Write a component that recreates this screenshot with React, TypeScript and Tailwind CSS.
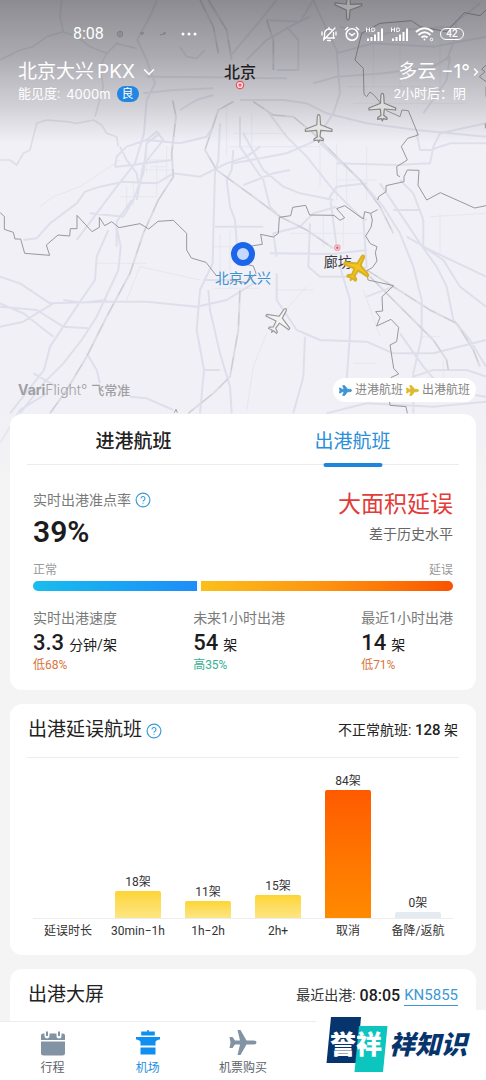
import React from "react";
import { ChevronDown, ChevronRight } from "lucide-react";

const PLANE =
  "M0 -42 C3 -42 4.500 -36 4.500 -30 L5.500 -12 L40 2 V8 L6 5 L4 24 L14 31 V36 L2.500 34 L0 41 L-2.500 34 L-14 36 V31 L-4 24 L-6 5 L-40 8 V2 L-5.500 -12 L-4.500 -30 C-4.500 -36 -3 -42 0 -42Z";

const ROADS = [
  "M470 0 C455 50 430 80 412 120 L440 180 L465 250 L440 300 L432 400 L405 490 L350 560 L290 640 L230 720",
  "M0 910 L70 940 L160 1010 M320 905 L150 910 M320 905 L440 905 L590 920 L680 900 L760 850",
  "M0 830 L60 850 L150 910 M190 900 L245 908 L320 900",
  "M0 980 L70 965 L160 910 M0 920 L110 930 L190 980 L265 985",
  "M350 680 L362 740 L355 810 L290 950 L245 1020 L190 1090 L130 1150 L60 1240",
  "M325 690 L290 770 L285 840 L230 920 L150 1040 L132 1110 L30 1240",
  "M395 600 L350 665 L350 740",
  "M70 720 L110 715 L150 670 L230 610 L255 575 L300 560 L370 545 L470 550 L520 520 L600 530 L680 490 L740 470 L780 440",
  "M270 640 L370 650 L400 600 L430 520 L440 430 L480 400",
  "M345 500 L350 470 L380 440 L440 420 L540 430 L620 410 L640 380",
  "M345 500 L400 495 L430 490 L520 480",
  "M360 440 L380 480 L410 520 L415 550",
  "M440 420 L470 395 L490 420 L430 495 L410 600",
  "M660 370 L655 480 L645 520 L640 700 L638 790 L600 870 L590 990 L612 1110 L600 1240",
  "M700 450 L695 510 L680 540 L690 620 L705 660 L715 790",
  "M645 680 L790 680 M610 840 L700 840 M615 1110 L660 1110",
  "M625 870 L630 930 L660 1060 L690 1160 L695 1240",
  "M720 300 L850 300 L920 310 L980 340 L1100 370 L1250 390 L1458 410",
  "M800 330 L860 410 L920 470 L1000 570 L1080 650 L1100 660",
  "M730 400 L790 510 L850 560 L900 580 L1000 600",
  "M730 555 L820 520 L870 510 M700 490 L860 460 L940 425 L960 400 L1000 340 L1020 280 L1010 150",
  "M720 350 L720 440 L790 540 L810 620 L830 640",
  "M1010 490 L1190 495 L1290 490 L1300 440 L1320 400 L1458 370",
  "M1250 400 L1260 450 L1290 450 L1350 430 L1458 430",
  "M1100 550 L1010 560 L990 590 L1010 740",
  "M960 430 L1080 540 L1150 620 L1200 700 L1240 800 L1265 900 L1265 1010 L1240 1120 L1240 1240",
  "M1200 540 L1240 580 L1270 660 L1270 740 L1330 780 L1380 860 L1458 920",
  "M1140 550 L1200 640 L1260 730 L1310 800 L1340 860 L1360 960 L1410 1020 L1458 1100",
  "M1180 630 L1260 630 M1220 710 L1290 750 L1458 830",
  "M830 770 L820 700 L900 680 L940 640 L1010 620",
  "M810 760 L1000 762 L1100 750",
  "M930 670 L925 800 L960 830 L1060 830 L1100 800 L1090 660",
  "M830 820 L830 900 L890 990 L960 1020 L1100 1025 L1180 1060 L1300 1060 L1458 1020",
  "M1020 800 L1050 900 L1050 1000 L1040 1140",
  "M915 1010 L910 1130 L880 1240",
  "M1180 860 L1100 890 M1200 1000 L1270 1100 L1330 1170 L1458 1190",
  "M1240 1130 L1300 1110 L1400 1110 L1458 1130",
  "M940 250 L1010 230 L1150 220 L1300 200 L1350 170",
  "M1010 160 L1120 130 L1300 140 L1458 110",
  "M1020 80 L1120 110 L1200 90 L1350 80 L1440 10",
  "M440 230 L640 232 L860 235 M430 280 L520 270 L640 265",
  "M540 330 L590 300 L640 285 M800 60 L900 65 L940 0",
  "M690 170 L790 50 L830 0 M740 180 L800 120 L870 80 L930 50",
  "M860 80 L895 120 L895 210 L830 210 M940 0 L985 100 L1015 160",
  "M980 1240 L1100 1210 L1300 1220 L1458 1205",
  "M390 1190 L440 1195 L520 1230 M260 1060 L290 1110 L300 1150",
  "M1340 180 L1360 130 L1370 60 M1270 340 L1340 240 L1350 170",
  "M0 1330 L60 1230 L140 1180 M100 1120 L170 1160",
];

const MINOR = [
  "M440 480 H510 M440 450 V520 M470 480 V590 M500 440 V540 M420 510 H520 M450 500 H500",
  "M380 560 V640 M360 590 H470 M400 540 V620",
  "M680 320 V470 M755 340 V460 M700 400 H860 M690 440 H960 M960 420 V560 M1010 430 V600",
  "M1040 500 V620 M1100 440 V600 M1010 540 H1130 M870 700 H1090 M1030 650 V740 M970 650 V740",
  "M1120 100 V260 M1200 60 V260 M1320 120 V300 M1040 260 H1300 M1060 310 H1400",
  "M660 700 V860 M690 690 V870 M640 740 H700 M640 865 H780 M830 870 H940",
  "M420 800 L380 900 M420 800 L600 840 M290 790 L440 790 M920 860 L830 960",
  "M1090 870 L1140 1010 M1060 1090 H1130 M800 1000 L760 1100 L740 1230",
  "M1290 650 L1458 640 M1320 640 V760 M1260 1010 H1320 M1330 1080 V1160",
  "M120 620 L160 590 L240 560 L330 500 L360 480",
];

const RAILS = [
  "M475 600 L520 530 L515 460 L528 350 L518 300",
  "M475 600 L430 700 L390 820 L320 950 L260 1070 L200 1170 L150 1240",
  "M700 305 L655 330 L615 450 L650 510 L760 590 L840 650 L920 690 L1000 745",
  "M760 305 L820 345 L880 350 L940 400 L1000 460 L1080 540 L1140 620 L1180 700",
  "M1100 810 L1180 860 L1290 930 L1370 970 L1420 1050 L1440 1100",
  "M1110 830 L1210 930 L1300 1020 L1340 1080 L1345 1110",
  "M720 870 L715 990 L690 1130 L640 1180 L565 1240",
  "M600 0 L640 80 L655 160 M625 0 L680 90 L695 180 M800 60 L820 120 L820 210",
];

const BORDERS = [
  "M0 637 L13 650 L13 688 L40 697 L45 717 L62 717 L74 760 L149 766 L139 735 L174 705 L209 708 L211 686 L231 686 L231 646 L276 695 L298 682 L298 652 L314 677 L335 665 L357 683 L420 671 L446 687 L474 664 L520 661 L560 700 L560 750 L574 774 L618 787 L650 828",
  "M754 738 L787 733 L782 703 L820 711 L835 700 L838 652 L872 647 L878 622 L917 616 L929 645 L1002 646 L1020 661 L1034 653 L1010 626 L1034 617 L1090 657 L1094 635 L1112 640 L1133 629",
  "M1112 640 L1117 660 L1113 682 L1097 708 L1111 731 L1131 740 L1126 758 L1131 783 L1117 803 L1100 812 L1104 840 L1181 857 L1146 890 L1148 933 L1127 935 L1140 952 L1130 978 L1173 958 L1196 982 L1190 1025 L1170 1035 L1181 1105 L1196 1122 L1172 1133",
  "M1133 600 L1136 590 L1158 575 L1158 557 L1212 545 L1212 530 L1222 510 L1257 511 L1254 556 L1280 600 L1321 578 L1424 624 L1458 617",
  "M1200 530 L1192 526 L1190 500 L1222 480 L1204 440 L1223 415 L1255 405 L1225 332 L1206 330 L1200 350 L1160 332 L1124 287 L1110 276 L1100 290 L1092 283 L1090 205 L1065 180 L1085 100 L1140 70 L1235 62 L1260 80 L1340 95 L1393 38 L1440 47 L1458 30",
  "M1458 195 L1445 208 L1455 215 L1438 230 L1458 245 M1458 260 V290 M1456 370 V385 M1168 1200 L1170 1216 L1218 1220 L1222 1240 M523 1238 L528 1228 L532 1238",
  "M728 790 L760 798 L768 820 L740 848 L690 840",
];

const HILLS =
  "M0 480 L30 480 L50 495 L70 460 L90 450 L110 370 L140 360 L200 365 L230 370 L280 360 L305 375 L320 400 L350 410 L355 440 M0 180 L60 150 L100 140 L140 110 L190 95 L180 50 L185 0 M190 95 L230 110 L270 140 L320 160 L300 200 L310 260 L285 350 M320 160 L350 130 L410 145 M540 140 L560 170 L590 175 L615 150";

function MapPlane({ x, y, turn, fill, stroke }: { x: number; y: number; turn: number; fill: string; stroke: string }) {
  return (
    <path d={PLANE} transform={`translate(${x} ${y}) rotate(${turn})`} fill={fill} stroke={stroke} strokeWidth={3.5} strokeLinejoin="round" />
  );
}

function AirMap() {
  return (
    <div className="absolute inset-x-0 top-0 h-[490px] overflow-hidden bg-[#f0f0f6]" aria-hidden="true">
      <svg viewBox="0 0 1458 1470" preserveAspectRatio="xMidYMin slice" className="block size-full">
        <defs>
          <linearGradient id="topShade" x1="0" y1="0" x2="0" y2="1">
            <stop offset="0" stopColor="#3c3c42" stopOpacity="0.56" />
            <stop offset="0.4" stopColor="#44444a" stopOpacity="0.4" />
            <stop offset="0.75" stopColor="#55555c" stopOpacity="0.2" />
            <stop offset="1" stopColor="#66666c" stopOpacity="0" />
          </linearGradient>
          <linearGradient id="bottomFade" x1="0" y1="0" x2="0" y2="1">
            <stop offset="0" stopColor="#f4f4f4" stopOpacity="0" />
            <stop offset="1" stopColor="#f4f4f4" />
          </linearGradient>
        </defs>
        <g fill="none" strokeLinejoin="round">
          <path d={MINOR.join(" ")} stroke="#e6e6f0" strokeWidth={3} />
          <path d={ROADS.join(" ")} stroke="#dfdfec" strokeWidth={6} />
          <path d={HILLS} stroke="#dedee4" strokeWidth={5} />
          <path d={RAILS.join(" ")} stroke="#dcdce4" strokeWidth={6} />
          <path d={RAILS.join(" ")} stroke="#cbcad2" strokeWidth={3} strokeDasharray="38 30" />
          <path d={BORDERS.join(" ")} stroke="#98989d" strokeWidth={3} />
        </g>
        <rect width="1458" height="430" fill="url(#topShade)" />
        <rect y="1220" width="1458" height="250" fill="url(#bottomFade)" />
        <g fill="none" stroke="#e4525e" strokeWidth={3.5}>
          <circle cx="720" cy="255" r="11" fill="#f6dfe3" />
          <circle cx="720" cy="255" r="3" />
          <circle cx="1012" cy="743" r="8" stroke="#efaab4" strokeWidth={4} fill="#f6dfe3" />
          <circle cx="1012" cy="743" r="2" />
        </g>
        <circle cx="729" cy="762" r="27" fill="#c5d9ff" stroke="#1d65ea" strokeWidth={18} />
        <MapPlane x={1045} y={18} turn={182} fill="#a9a9ac" stroke="#707072" />
        <MapPlane x={1147} y={322} turn={0} fill="#dddddb" stroke="#828180" />
        <MapPlane x={956} y={386} turn={0} fill="#e6e6e4" stroke="#8b8a88" />
        <MapPlane x={836} y={962} turn={31} fill="#f3f3f3" stroke="#99999b" />
      </svg>
      <span className="absolute top-[63px] left-[49.4%] -translate-x-1/2 text-[16px] leading-[20px] font-medium text-[#1f1f22]">北京</span>
      <span className="absolute top-[269px] left-1/2 -translate-x-1/2 text-[14px] leading-[18px] text-[#3d92d0]">北京大兴</span>
      <span className="absolute top-[253px] left-[69.5%] -translate-x-1/2 text-[14px] leading-[18px] text-[#3a3a3d]">廊坊</span>
      <svg viewBox="-45 -45 90 90" className="absolute top-[253px] left-[73.4%] size-[30px] -translate-x-1/2">
        <path d={PLANE} transform="rotate(28)" fill="#f3c522" stroke="#d9b022" strokeWidth={6} strokeLinejoin="round" />
      </svg>
    </div>
  );
}

function Signal() {
  return (
    <svg viewBox="0 0 20 16" className="h-4 w-5" fill="currentColor">
      <path d="M2 12.500h2V15H2zM5.500 11h2v4h-2zM9 8.500h2V15H9zM12.500 6h2v9h-2zM16 2.500h2V15h-2z" />
      <path d="M1.500 1.500v4.500M4.500 1.500v4.500M1.500 3.700h3M6.700 2v3.500h1.300q1.800 0 1.800-1.800T8 2z" fill="none" stroke="currentColor" strokeWidth="0.900" />
    </svg>
  );
}

function StatusBar() {
  return (
    <div className="flex items-center justify-between pr-[22px] pl-[73px] pt-6 text-white">
      <div className="flex items-center">
        <span className="text-[16px] leading-5">8:08</span>
        <svg viewBox="0 0 52 8" className="ml-[12px] h-2 w-[52px]" fill="none" stroke="#808085" strokeWidth="1.300">
          <circle cx="4" cy="4" r="2.500" />
          <path d="M3 4h2M24 3h4M26 3v2M44 5l3-1M48 5v-2l2 0" />
        </svg>
        <svg viewBox="0 0 16 4" className="ml-[13px] h-1 w-4" fill="currentColor">
          <circle cx="2" cy="2" r="1.500" />
          <circle cx="8" cy="2" r="1.500" />
          <circle cx="14" cy="2" r="1.500" />
        </svg>
      </div>
      <div className="flex items-center gap-[5px]">
        <svg viewBox="0 0 16 16" className="mr-0.5 size-4" fill="none" stroke="currentColor" strokeWidth="1.300" strokeLinecap="round">
          <path d="M3.500 12V7.500a4.500 4.500 0 0 1 7-3.700M12.500 6.500V12H6M2.500 12h1M12.500 12h1M6.500 14.500h3M14 2 2.500 14M8 2.500v-1M1 6v3M15 6v3" />
        </svg>
        <svg viewBox="0 0 16 16" className="size-4" fill="none" stroke="currentColor" strokeWidth="1.500" strokeLinecap="round">
          <circle cx="8" cy="8.500" r="5.800" />
          <path d="M5.500 7.500 8 9.500l2.500-2M1.500 3.500l2.200-2M14.500 3.500l-2.200-2" />
        </svg>
        <Signal />
        <Signal />
        <svg viewBox="0 0 20 16" className="h-4 w-5" fill="none" stroke="currentColor" strokeWidth="1.900">
          <path d="M1 6q8.500-7.500 17 0M3.500 9q6-5.500 12 0M6.500 11.500q3-2.500 6 0" />
          <circle cx="9.500" cy="13.500" r="1" fill="currentColor" stroke="none" />
          <circle cx="16.500" cy="13.500" r="1.300" strokeWidth="1" />
        </svg>
        <span className="flex h-[12px] w-6 items-center justify-center rounded-full border border-white text-[10px] leading-none font-medium">42</span>
      </div>
    </div>
  );
}

function HelpButton({ label }: { label: string }) {
  return (
    <button type="button" aria-label={label} className="text-[#3b9bd6]">
      <svg viewBox="0 0 16 16" className="block size-4" fill="none" stroke="currentColor">
        <circle cx="8" cy="8" r="6.900" strokeWidth="1.200" />
        <path d="M6 6.500a2 2 0 1 1 3 1.700q-1 .5-1 1.300M8 10.700v1" strokeWidth="1.100" />
      </svg>
    </button>
  );
}

function LegendPlane({ tone }: { tone: string }) {
  return (
    <svg viewBox="0 0 16 14" className={`size-[13px] ${tone}`} fill="currentColor">
      <path d="M15.500 7q0 1.500-2.500 1.500h-2.500L7 13H4.500l1.800-4.500H3.500L2 10H.5l.7-3L.500 4H2l1.500 1.500h2.800L4.500 1H7l3.500 4.500H13q2.500 0 2.500 1.500Z" stroke="currentColor" strokeLinejoin="round" />
    </svg>
  );
}

const stats = [
  { label: "实时出港速度", value: "3.3", unit: "分钟/架", delta: "低68%", tone: "text-[#d97440]" },
  { label: "未来1小时出港", value: "54", unit: "架", delta: "高35%", tone: "text-[#37b093]" },
  { label: "最近1小时出港", value: "14", unit: "架", delta: "低71%", tone: "text-[#d97440]" },
];

const bars = [
  { label: "30min−1h", count: 18, height: 27, fill: "bg-linear-to-b from-[#fdd52f] to-[#fde682]" },
  { label: "1h−2h", count: 11, height: 17, fill: "bg-linear-to-b from-[#fdd52f] to-[#fde682]" },
  { label: "2h+", count: 15, height: 23, fill: "bg-linear-to-b from-[#fdd52f] to-[#fde682]" },
  { label: "取消", count: 84, height: 128, fill: "bg-linear-to-b from-[#ff5a00] to-[#ff8a00]" },
  { label: "备降/返航", count: 0, height: 6, fill: "bg-[#e4ebf1]" },
];

function PunctualityCard() {
  return (
    <section className="rounded-xl bg-white">
      <div role="tablist" className="grid grid-cols-2 px-[14px] text-[19px]">
        <button type="button" role="tab" aria-selected="false" className="h-[50px] pt-1.5 font-medium text-[#222]">
          进港航班
        </button>
        <button type="button" role="tab" aria-selected="true" className="relative h-[50px] pt-1.5 text-[#2a8fd8]">
          出港航班
          <span className="absolute -bottom-[3px] left-1/2 h-1 w-[59px] -translate-x-1/2 rounded-full bg-[#1d86dc]" />
        </button>
      </div>
      <div className="mx-[17px] h-px bg-[#ececec]" />
      <div className="px-[23px] pb-[17px]">
        <div className="flex justify-between pt-6">
          <div>
            <div className="flex items-center gap-1 pt-px text-[14px] leading-5 text-[#7a7a7a]">
              实时出港准点率
              <HelpButton label="准点率说明" />
            </div>
            <p className="mt-1 text-[30px] leading-9 font-semibold text-[#1c1c1e]">39%</p>
          </div>
          <div className="text-right">
            <p className="text-[23px] leading-8 text-[#e23c39]">大面积延误</p>
            <p className="mt-[3px] text-[14px] leading-5 text-[#666]">差于历史水平</p>
          </div>
        </div>
        <div className="mt-3 flex justify-between text-[12px] leading-4 text-[#9a9a9a]">
          <span>正常</span>
          <span>延误</span>
        </div>
        <div className="mt-[3px] flex h-[10px] gap-1 overflow-hidden rounded-full">
          <div className="bg-linear-to-r from-[#1bbcee] to-[#1e8df8]" style={{ width: "39%" }} />
          <div className="flex-1 bg-linear-to-r from-[#fbbf1a] via-[#fd9210] to-[#f95200]" />
        </div>
        <div className="mt-[17px] flex justify-between">
          {stats.map((s) => (
            <div key={s.label}>
              <p className="text-[14px] leading-5 text-[#7a7a7a]">{s.label}</p>
              <p className="mt-px flex h-7 items-baseline gap-[5px] leading-7 text-[#1c1c1e]">
                <span className="text-[22px] font-medium">{s.value}</span>
                <span className="text-[14px]">{s.unit}</span>
              </p>
              <p className={`text-[12px] leading-4 ${s.tone}`}>{s.delta}</p>
            </div>
          ))}
        </div>
      </div>
    </section>
  );
}

function DelayCard() {
  return (
    <section className="rounded-xl bg-white pb-[15px]">
      <div className="flex h-[53px] items-center justify-between px-[18px]">
        <h2 className="flex items-center gap-1 text-[19px] text-[#222]">
          出港延误航班
          <HelpButton label="延误航班说明" />
        </h2>
        <p className="text-[14px] text-[#222]">
          不正常航班: <span className="text-[15px] font-medium">128</span> 架
        </p>
      </div>
      <div className="mx-[17px] h-px bg-[#ececec]" />
      <div className="px-[23px] text-center text-[12px] text-[#333]">
        <div className="grid h-[161px] grid-cols-6 items-end border-b border-[#ededed]">
          <span />
          {bars.map((b) => (
            <div key={b.label} className="flex flex-col items-center">
              <span className="leading-[18px]">{b.count}架</span>
              <div className={`w-[46px] rounded-t-xs ${b.fill}`} style={{ height: b.height }} />
            </div>
          ))}
        </div>
        <div className="grid grid-cols-6 pt-[3px] leading-[18px] whitespace-nowrap">
          <span>延误时长</span>
          {bars.map((b) => (
            <span key={b.label}>{b.label}</span>
          ))}
        </div>
      </div>
    </section>
  );
}

function BoardCard() {
  return (
    <section className="min-h-20 rounded-xl bg-white">
      <div className="flex h-[53px] items-center justify-between px-[18px]">
        <h2 className="text-[19px] text-[#222]">出港大屏</h2>
        <p className="flex items-center gap-1 text-[14px] text-[#333]">
          最近出港: <span className="text-[16px] leading-5 font-medium text-[#1c1c1e]">08:05</span>
          <a href="#KN5855" className="border-b border-[#3d97d6] text-[15px] leading-[19px] text-[#3d97d6]">
            KN5855
          </a>
        </p>
      </div>
    </section>
  );
}

function PartnerLogo() {
  return (
    <div className="absolute right-0 bottom-0 flex h-[70px] w-[170px] items-center bg-white text-[26px] leading-none font-black">
      <svg viewBox="0 0 170 70" className="absolute inset-0 size-full" aria-hidden="true">
        <path d="M15 7h30l-4 46H10.500z" fill="#05356c" />
        <path d="M43 16h28.500L67 62H38.500z" fill="#0cc5bf" />
      </svg>
      <span className="relative pl-[14px] text-white">誉祥</span>
      <span className="relative pl-[7px] text-[#05356c] italic">祥知识</span>
    </div>
  );
}

function BottomNav() {
  return (
    <nav className="relative h-[59px] shrink-0 border-t border-[#ededed] bg-white px-[5px] text-[12px] text-[#5c636a]">
      <div className="grid grid-cols-5">
        <a href="#trips" className="flex flex-col items-center pt-2">
          <svg viewBox="0 0 30 30" className="size-[30px]" fill="#8293a3">
            <path d="M3 5.500Q3 3.500 5 3.500H6.500V6a2.500 2.500 0 0 0 5 0V3.500H18.500V6a2.500 2.500 0 0 0 5 0V3.500H25q2 0 2 2v4.500H3zM3 11.500H27V23q0 2.500-2.500 2.500h-19Q3 25.500 3 23z" />
            <path d="M8 1.500h2V6H8zM20 1.500h2V6h-2z" />
          </svg>
          <span className="leading-4">行程</span>
        </a>
        <a href="#airport" aria-current="page" className="flex flex-col items-center pt-2 text-[#1f8fe0]">
          <svg viewBox="0 0 30 30" className="size-[30px]" fill="#0f8ff0">
            <path d="M14.200 0h1.600V1.500h6V5.500H8.200V1.500h6zM3 7h24v2.500q-4 .5-4.500 2.500v3.500h-15V12Q7 10 3 9.500zM7.500 17.500h15V24.500h-15z" />
          </svg>
          <span className="leading-4">机场</span>
        </a>
        <a href="#tickets" className="flex flex-col items-center pt-2">
          <svg viewBox="0 0 30 30" className="size-[30px]" fill="#8293a3">
            <path d="M28.500 12.500q0 2-3 2h-7L12.500 25h-3l2.500-10.500H7L4.500 18H1.500l1-5.500-1-5.500h3L7 10.500h5L9.500 0h3l6 10.500h7q3 0 3 2Z" />
          </svg>
          <span className="leading-4">机票购买</span>
        </a>
      </div>
      <PartnerLogo />
    </nav>
  );
}

export default function App() {
  return (
    <div className="flex h-screen flex-col bg-[#f4f4f4] font-[Roboto,'Noto_Sans_CJK_SC',sans-serif]">
      <main className="relative min-h-0 flex-1 overflow-y-auto [scrollbar-width:none]">
        <AirMap />
        <header className="relative flex min-h-[414px] flex-col">
          <StatusBar />
          <div className="flex items-start justify-between pt-4 pr-2 pl-[18px] text-white">
            <div>
              <button type="button" className="flex items-center gap-[3px] text-[19px] leading-6">
                <span>北京大兴</span>
                <span className="font-[Inter,sans-serif]">PKX</span>
                <ChevronDown className="ml-0.5 size-[18px]" strokeWidth={2} />
              </button>
              <p className="flex items-center gap-[6px] text-[13px] leading-5">
                <span>能见度:</span>
                <span className="font-[Inter,sans-serif]">4000m</span>
                <span className="rounded-full bg-[#2286e2] px-[5px] text-[12px] leading-4">良</span>
              </p>
            </div>
            <div className="flex items-start">
              <div className="text-right">
                <p className="text-[19px] leading-6">
                  多云 <span className="font-[Inter,sans-serif]">−1°</span>
                </p>
                <p className="pr-1 text-[13px] leading-5">2小时后：阴</p>
              </div>
              <ChevronRight className="mt-1.5 -mr-1 size-3" strokeWidth={3} />
            </div>
          </div>
          <div className="mt-auto flex items-center justify-between pr-[10px] pb-3 pl-[18px]">
            <p className="flex items-center gap-1 font-[Inter,'Noto_Sans_CJK_SC',sans-serif] text-[14px] leading-5 text-[#a0a0a4]">
              <span>
                <span className="font-bold">Vari</span>
                <span className="font-light">Flight°</span>
              </span>
              <span className="text-[13px] font-medium">飞常准</span>
            </p>
            <div className="flex h-6 items-center gap-[3px] rounded-full bg-white px-[6px] text-[12px] text-[#858585]">
              <LegendPlane tone="text-[#3f93d2]" />
              进港航班
              <LegendPlane tone="text-[#dfba2a]" />
              出港航班
            </div>
          </div>
        </header>
        <div className="relative flex flex-col gap-[14px] px-[10px]">
          <PunctualityCard />
          <DelayCard />
          <BoardCard />
        </div>
      </main>
      <BottomNav />
    </div>
  );
}
